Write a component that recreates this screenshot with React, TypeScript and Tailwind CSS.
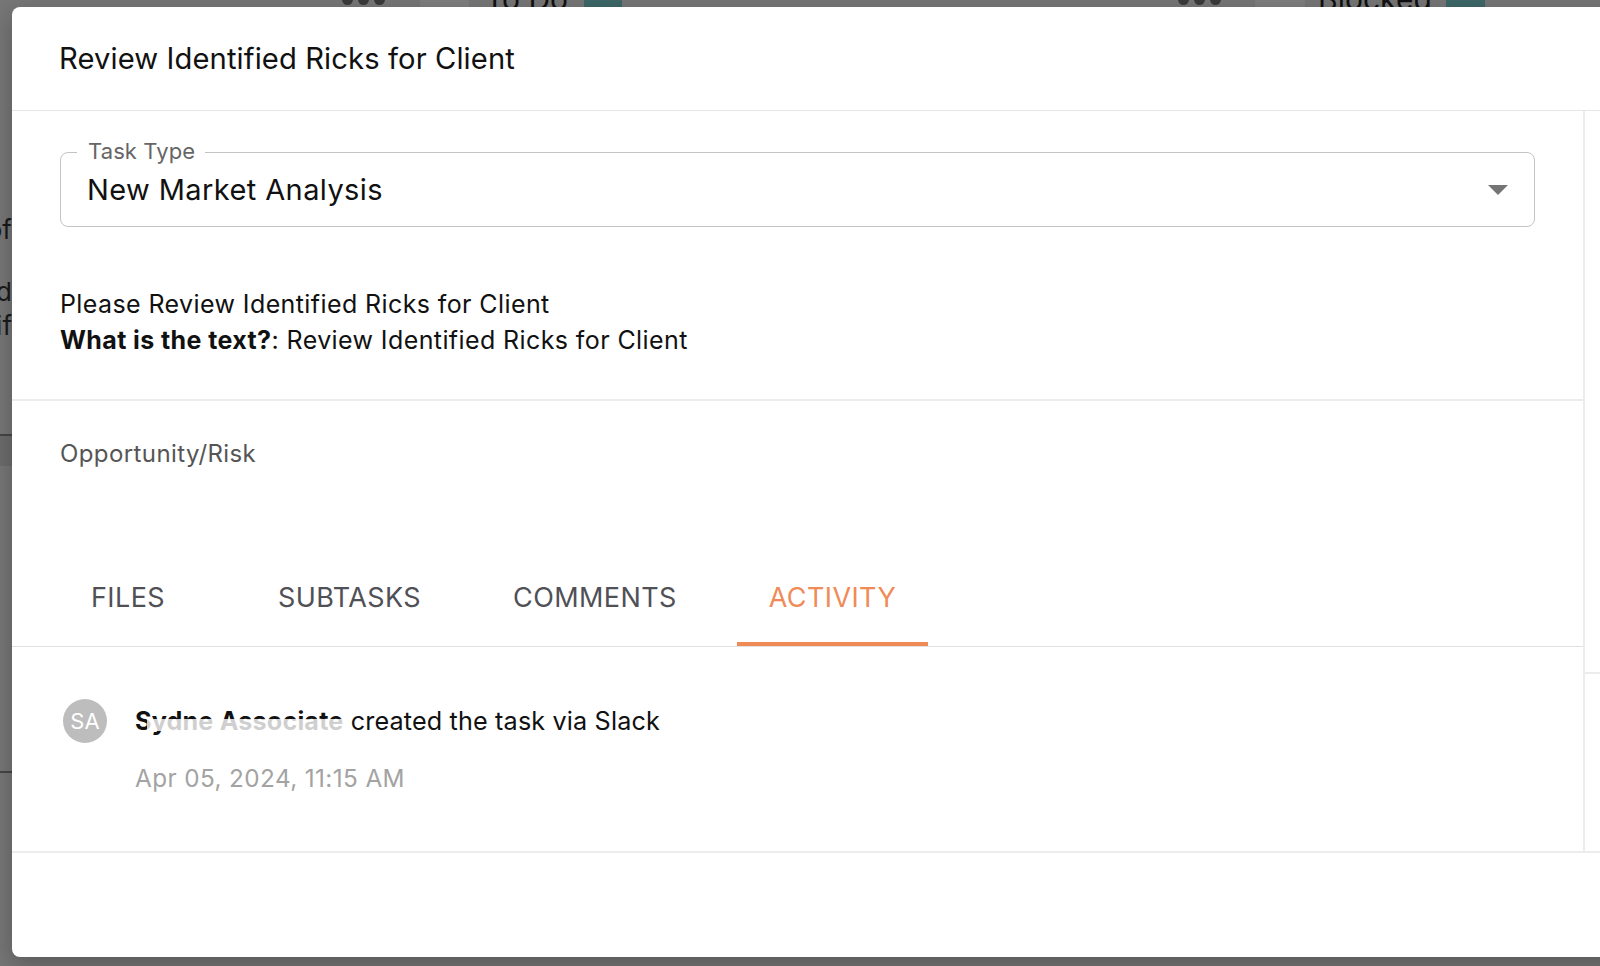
import React from "react";

function Dots() {
  return (
    <div className="flex gap-[5px]">
      <div className="h-[11px] w-[11px] rounded-full bg-[#3a3a3a]" />
      <div className="h-[11px] w-[11px] rounded-full bg-[#3a3a3a]" />
      <div className="h-[11px] w-[11px] rounded-full bg-[#3a3a3a]" />
    </div>
  );
}

export default function App() {
  const tabs = ["FILES", "SUBTASKS", "COMMENTS", "ACTIVITY"];
  const active = "ACTIVITY";
  return (
    <div className="relative h-[966px] w-[1600px] overflow-hidden bg-[#767676] font-['Inter','Noto_Sans',sans-serif]">
      {/* dimmed board behind the dialog */}
      <div className="flex flex-col">
        <div className="h-[7px] overflow-hidden">
          <div className="-mt-[16px] flex h-[30px] items-center text-[30px] leading-[30px] text-[#111]">
            <div className="ml-[342px]">
              <Dots />
            </div>
            <div className="ml-[35px] h-[30px] w-[49px] bg-[#7e7e7e]" />
            <div className="ml-[16px]">To Do</div>
            <div className="ml-[16px] h-[30px] w-[38px] rounded-[4px] bg-[#3d6767]" />
            <div className="ml-[556px]">
              <Dots />
            </div>
            <div className="ml-[34px] h-[30px] w-[50px] bg-[#7e7e7e]" />
            <div className="ml-[13px]">Blocked</div>
            <div className="ml-[14px] h-[30px] w-[39px] rounded-[4px] bg-[#3d6767]" />
          </div>
        </div>
        <div className="w-[12px] overflow-hidden">
          <div className="-ml-[200px] flex w-[212px] flex-col items-end text-[26px] leading-[34px] text-[#1a1a1a]">
            <div className="mt-[206px]">of</div>
            <div className="mt-[28px]">and</div>
            <div className="mt-[0px]">if</div>
          </div>
          <div className="mt-[91px] h-[2px] w-[12px] bg-[#454545]" />
          <div className="h-[30px] w-[12px] bg-[#6c6c6c]" />
          <div className="mt-[305px] h-[2px] w-[12px] bg-[#454545]" />
        </div>
      </div>

      {/* dialog */}
      <div className="absolute left-[12px] top-[7px] flex h-[950px] w-[1620px] flex-col rounded-[8px] bg-white shadow-[0_8px_24px_rgba(0,0,0,0.25)]">
        <div className="flex h-[104px] items-center border-b border-[#e6e6e6] pl-[47px]">
          <h1 className="text-[29.2px] font-normal leading-[34px] tracking-[0.1px] text-[#111]">
            Review Identified Ricks for Client
          </h1>
        </div>

        <div className="flex h-[742px] border-b-2 border-[#ececec]">
          {/* main column */}
          <div className="flex w-[1573px] flex-col border-r-2 border-[#ececec]">
            <div className="border-b-2 border-[#ececec] px-[48px] pb-[41px] pt-[41px]">
              <div className="relative flex h-[75px] w-[1475px] items-center justify-between rounded-[8px] border-[1.5px] border-[#c4c4c4] pl-[26px] pr-[26px]">
                <div className="absolute -top-[15px] left-[16px] bg-white pl-[11px] pr-[10px] text-[22px] leading-[26px] tracking-[0.1px] text-[#666]">
                  Task Type
                </div>
                <span className="text-[29px] leading-[34px] tracking-[0.4px] text-[#111]">New Market Analysis</span>
                <svg width="20" height="10" viewBox="0 0 20 10" className="mt-[1px]">
                  <path d="M0 0 L20 0 L10 10 Z" fill="#757575" />
                </svg>
              </div>
              <div className="mt-[59px] text-[25px] leading-[36px] tracking-[0.4px] text-[#111]">
                <p>Please Review Identified Ricks for Client</p>
                <p>
                  <strong className="font-bold">What is the text?</strong>: Review Identified Ricks for Client
                </p>
              </div>
            </div>

            <div className="pt-[38px]">
              <div className="pl-[48px] text-[24px] font-normal leading-[30px] tracking-[0.4px] text-[#555]">
                Opportunity/Risk
              </div>
              <div className="mt-[81px] flex gap-[28px] border-b border-[#e0e0e0] pl-[26px]">
                {tabs.map((t) => (
                  <div
                    key={t}
                    className={
                      "relative flex h-[96px] min-w-[180px] items-center justify-center px-[32px] text-[27px] font-normal tracking-[0.4px] " +
                      (t === active ? "text-[#f08b58]" : "text-[#505057]")
                    }
                  >
                    {t}
                    {t === active && (
                      <div className="absolute bottom-0 left-0 right-0 h-[4px] bg-[#f08b58]" />
                    )}
                  </div>
                ))}
              </div>
            </div>

            <div className="flex flex-1 items-start gap-[28px] pl-[51px] pt-[52px]">
              <div className="flex h-[44px] w-[44px] shrink-0 items-center justify-center rounded-full bg-[#bdbdbd] text-[22px] text-white">
                SA
              </div>
              <div className="-mt-[1px] flex flex-col">
                <div className="text-[25.2px] leading-[46px] tracking-[0.15px] text-[#111]">
                  <span className="relative font-bold">
                    Sydne Associate
                    <span className="absolute left-[12px] right-0 top-[13px] h-[12px] bg-white/80" />
                  </span>{" "}
                  created the task via Slack
                </div>
                <div className="mt-[17px] text-[24.3px] leading-[34px] tracking-[0.4px] text-[#a3a3a3]">
                  Apr 05, 2024, 11:15 AM
                </div>
              </div>
            </div>
          </div>

          {/* side column */}
          <div className="flex flex-1 flex-col">
            <div className="h-[563px] border-b-2 border-[#ececec]" />
          </div>
        </div>
      </div>
    </div>
  );
}
